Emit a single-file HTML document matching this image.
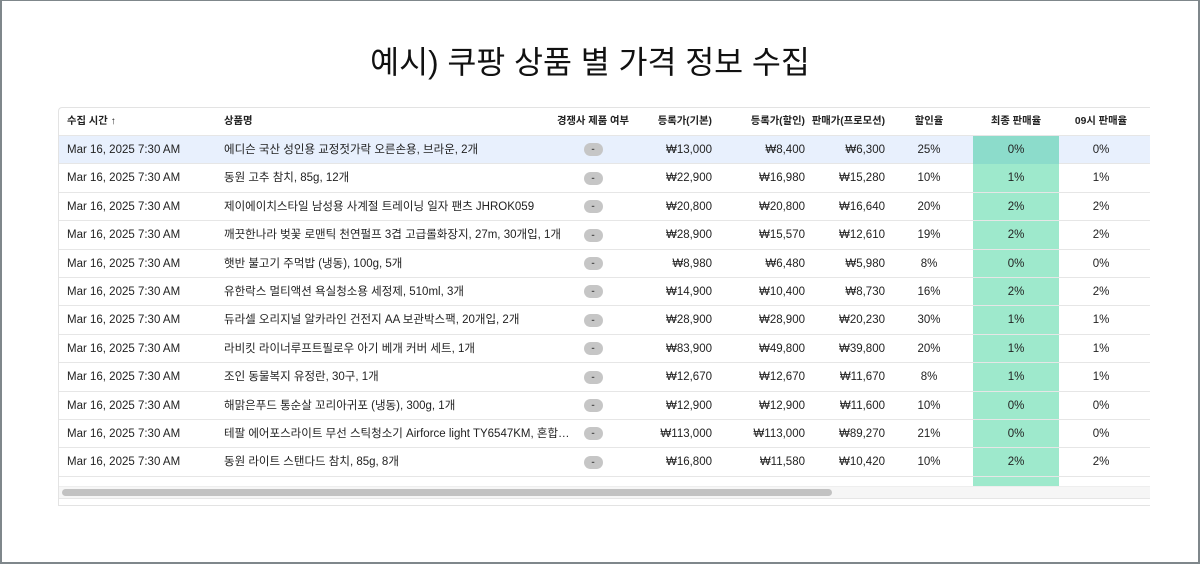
<!DOCTYPE html>
<html><head><meta charset="utf-8">
<style>
*{margin:0;padding:0;box-sizing:border-box}
html,body{width:1200px;height:564px;overflow:hidden;background:#fff}
body{position:relative;font-family:"Liberation Sans","Noto Sans CJK KR",sans-serif;color:#222}
.frame{position:absolute;left:0;top:0;width:1200px;height:564px;border:2px solid #7f878b;border-top-width:1px}
h1{position:absolute;left:-10px;width:1200px;top:41px;text-align:center;font-size:31.5px;font-weight:400;color:#111;font-family:"Liberation Sans","Noto Sans CJK KR",sans-serif;line-height:42px}
.tbl{position:absolute;left:58px;top:107px;width:1092px;height:399px;border:1px solid #e3e3e3;border-right:none;border-radius:4px 0 0 0;overflow:hidden}
.row{position:absolute;left:0;width:1092px;height:28.4px;border-bottom:1px solid #e6e6e6;font-size:11.5px}
.row div{position:absolute;top:0;line-height:28px;white-space:nowrap}
.hd{font-weight:700;font-size:10.3px;color:#222}
.green{position:absolute;left:914px;width:86px;top:28px;height:350px;background:#9ee9cc}
.c1{left:8px}.c2{left:165px}
.c3{left:480px;width:108px;text-align:center}
.c4{left:574px;width:79px;text-align:right}
.c5{left:660px;width:86px;text-align:right}
.c6{left:740px;width:86px;text-align:right}
.c7{left:830px;width:80px;text-align:center}
.c8{left:914px;width:86px;text-align:center}
.c9{left:1000px;width:84px;text-align:center}
.pill{display:inline-block;width:19px;height:13px;border-radius:7px;background:#c6c6c6;line-height:13px;font-size:10px;font-weight:700;vertical-align:middle;color:#555}
.sb{position:absolute;left:0;top:378px;width:1092px;height:13px;background:#f6f6f6;border-top:1px solid #eee;border-bottom:1px solid #e6e6e6;z-index:5}
.th{position:absolute;left:3px;top:2px;width:770px;height:7px;border-radius:4px;background:#c2c2c2}
.cover{position:absolute;left:0;top:391px;width:1092px;height:10px;background:#fff;z-index:5}
</style></head><body>
<div class="frame"></div>
<h1>예시) 쿠팡 상품 별 가격 정보 수집</h1>
<div class="tbl">
<div class="green"></div>
<div class="row hd" style="top:0;height:28px"><div class="c1">수집 시간 ↑</div><div class="c2">상품명</div><div class="c3">경쟁사 제품 여부</div><div class="c4">등록가(기본)</div><div class="c5">등록가(할인)</div><div class="c6">판매가(프로모션)</div><div class="c7">할인율</div><div class="c8">최종 판매율</div><div class="c9">09시 판매율</div></div>
<div class="row" style="top:28px;background:#e8f0fd"><div class="c1">Mar 16, 2025 7:30 AM</div><div class="c2">에디슨 국산 성인용 교정젓가락 오른손용, 브라운, 2개</div><div class="c3"><span class="pill">-</span></div><div class="c4">₩13,000</div><div class="c5">₩8,400</div><div class="c6">₩6,300</div><div class="c7">25%</div><div class="c8" style="background:#8cdccb">0%</div><div class="c9">0%</div></div>
<div class="row" style="top:56.4px"><div class="c1">Mar 16, 2025 7:30 AM</div><div class="c2">동원 고추 참치, 85g, 12개</div><div class="c3"><span class="pill">-</span></div><div class="c4">₩22,900</div><div class="c5">₩16,980</div><div class="c6">₩15,280</div><div class="c7">10%</div><div class="c8">1%</div><div class="c9">1%</div></div>
<div class="row" style="top:84.8px"><div class="c1">Mar 16, 2025 7:30 AM</div><div class="c2">제이에이치스타일 남성용 사계절 트레이닝 일자 팬츠 JHROK059</div><div class="c3"><span class="pill">-</span></div><div class="c4">₩20,800</div><div class="c5">₩20,800</div><div class="c6">₩16,640</div><div class="c7">20%</div><div class="c8">2%</div><div class="c9">2%</div></div>
<div class="row" style="top:113.2px"><div class="c1">Mar 16, 2025 7:30 AM</div><div class="c2">깨끗한나라 벚꽃 로맨틱 천연펄프 3겹 고급롤화장지, 27m, 30개입, 1개</div><div class="c3"><span class="pill">-</span></div><div class="c4">₩28,900</div><div class="c5">₩15,570</div><div class="c6">₩12,610</div><div class="c7">19%</div><div class="c8">2%</div><div class="c9">2%</div></div>
<div class="row" style="top:141.6px"><div class="c1">Mar 16, 2025 7:30 AM</div><div class="c2">햇반 불고기 주먹밥 (냉동), 100g, 5개</div><div class="c3"><span class="pill">-</span></div><div class="c4">₩8,980</div><div class="c5">₩6,480</div><div class="c6">₩5,980</div><div class="c7">8%</div><div class="c8">0%</div><div class="c9">0%</div></div>
<div class="row" style="top:170px"><div class="c1">Mar 16, 2025 7:30 AM</div><div class="c2">유한락스 멀티액션 욕실청소용 세정제, 510ml, 3개</div><div class="c3"><span class="pill">-</span></div><div class="c4">₩14,900</div><div class="c5">₩10,400</div><div class="c6">₩8,730</div><div class="c7">16%</div><div class="c8">2%</div><div class="c9">2%</div></div>
<div class="row" style="top:198.4px"><div class="c1">Mar 16, 2025 7:30 AM</div><div class="c2">듀라셀 오리지널 알카라인 건전지 AA 보관박스팩, 20개입, 2개</div><div class="c3"><span class="pill">-</span></div><div class="c4">₩28,900</div><div class="c5">₩28,900</div><div class="c6">₩20,230</div><div class="c7">30%</div><div class="c8">1%</div><div class="c9">1%</div></div>
<div class="row" style="top:226.8px"><div class="c1">Mar 16, 2025 7:30 AM</div><div class="c2">라비킷 라이너루프트필로우 아기 베개 커버 세트, 1개</div><div class="c3"><span class="pill">-</span></div><div class="c4">₩83,900</div><div class="c5">₩49,800</div><div class="c6">₩39,800</div><div class="c7">20%</div><div class="c8">1%</div><div class="c9">1%</div></div>
<div class="row" style="top:255.2px"><div class="c1">Mar 16, 2025 7:30 AM</div><div class="c2">조인 동물복지 유정란, 30구, 1개</div><div class="c3"><span class="pill">-</span></div><div class="c4">₩12,670</div><div class="c5">₩12,670</div><div class="c6">₩11,670</div><div class="c7">8%</div><div class="c8">1%</div><div class="c9">1%</div></div>
<div class="row" style="top:283.6px"><div class="c1">Mar 16, 2025 7:30 AM</div><div class="c2">해맑은푸드 통순살 꼬리아귀포 (냉동), 300g, 1개</div><div class="c3"><span class="pill">-</span></div><div class="c4">₩12,900</div><div class="c5">₩12,900</div><div class="c6">₩11,600</div><div class="c7">10%</div><div class="c8">0%</div><div class="c9">0%</div></div>
<div class="row" style="top:312px"><div class="c1">Mar 16, 2025 7:30 AM</div><div class="c2">테팔 에어포스라이트 무선 스틱청소기 Airforce light TY6547KM, 혼합…</div><div class="c3"><span class="pill">-</span></div><div class="c4">₩113,000</div><div class="c5">₩113,000</div><div class="c6">₩89,270</div><div class="c7">21%</div><div class="c8">0%</div><div class="c9">0%</div></div>
<div class="row" style="top:340.4px"><div class="c1">Mar 16, 2025 7:30 AM</div><div class="c2">동원 라이트 스탠다드 참치, 85g, 8개</div><div class="c3"><span class="pill">-</span></div><div class="c4">₩16,800</div><div class="c5">₩11,580</div><div class="c6">₩10,420</div><div class="c7">10%</div><div class="c8">2%</div><div class="c9">2%</div></div>
<div class="row" style="top:368.8px;border:none"><div class="c3" style="top:7px"><span class="pill"></span></div></div>
<div class="sb"><div class="th"></div></div>
<div class="cover"></div>
</div>
</body></html>
